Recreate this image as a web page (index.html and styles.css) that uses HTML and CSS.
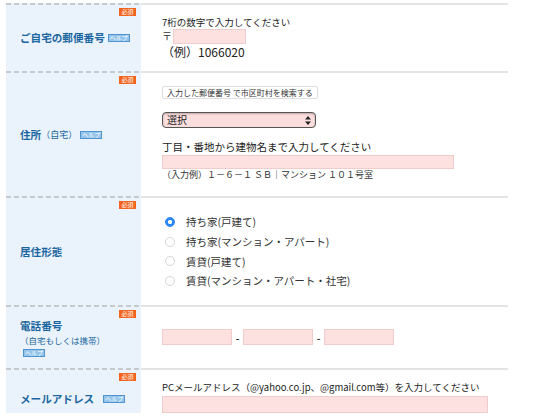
FILE: index.html
```html
<!DOCTYPE html>
<html lang="ja">
<head>
<meta charset="utf-8">
<title>お客様情報入力</title>
<link rel="stylesheet" href="styles.css">
</head>
<body>
<div class="form">
  <div class="row r1">
    <div class="th">
      <span class="req">必須</span>
      <div class="label"><span>ご自宅の郵便番号</span><span class="help">ヘルプ</span></div>
    </div>
    <div class="td td1">
      <p class="note">7桁の数字で入力してください</p>
      <div class="zip"><span class="mark">〒</span><input class="in zip-in" type="text"></div>
      <p class="ex">（例）1066020</p>
    </div>
  </div>

  <div class="row r2">
    <div class="th">
      <span class="req">必須</span>
      <div class="label"><span>住所</span><span class="sub">（自宅）</span><span class="help">ヘルプ</span></div>
    </div>
    <div class="td td2">
      <button class="search" type="button">入力した郵便番号 で市区町村を検索する</button>
      <div class="select">
        <select class="sel"><option>選択</option></select>
        <svg class="arrows" width="6" height="9" viewBox="0 0 6 9"><path d="M3 0 L6 3.5 H0 Z M3 9 L6 5.5 H0 Z" fill="#222"/></svg>
      </div>
      <p class="addr-note">丁目・番地から建物名まで入力してください</p>
      <input class="in addr-in" type="text">
      <p class="addr-ex">（入力例）１－６－１ ＳＢ｜マンション １０１号室</p>
    </div>
  </div>

  <div class="row r3">
    <div class="th">
      <span class="req">必須</span>
      <div class="label"><span>居住形態</span></div>
    </div>
    <div class="td td3">
      <ul class="radios">
        <li><input type="radio" name="house" checked><span>持ち家(戸建て)</span></li>
        <li><input type="radio" name="house"><span>持ち家(マンション・アパート)</span></li>
        <li><input type="radio" name="house"><span>賃貸(戸建て)</span></li>
        <li><input type="radio" name="house"><span>賃貸(マンション・アパート・社宅)</span></li>
      </ul>
    </div>
  </div>

  <div class="row r4">
    <div class="th">
      <span class="req">必須</span>
      <div class="label-block">
        <div class="label"><span>電話番号</span></div>
        <div class="sub-line">（自宅もしくは携帯）</div>
        <span class="help help-block">ヘルプ</span>
      </div>
    </div>
    <div class="td td4">
      <div class="tel">
        <input class="in tel-in" type="text"><span class="dash">-</span><input class="in tel-in" type="text"><span class="dash">-</span><input class="in tel-in" type="text">
      </div>
    </div>
  </div>

  <div class="row r5">
    <div class="th th5">
      <span class="req">必須</span>
      <div class="label"><span>メールアドレス</span><span class="help help-wide">ヘルプ</span></div>
    </div>
    <div class="td td5">
      <p class="note">PCメールアドレス（@yahoo.co.jp、@gmail.com等）を入力してください</p>
      <input class="in mail-in" type="text">
    </div>
  </div>
</div>
</body>
</html>
```

FILE: styles.css
```css
* { box-sizing: border-box; }
html, body { margin: 0; padding: 0; background: #fff; }
body {
  font-family: "Noto Sans CJK JP", "Noto Sans", sans-serif;
  color: #333;
  overflow: hidden;
}
p { margin: 0; }

.form { margin: 3px 0 0 6px; width: 502px; }

.row { display: grid; grid-template-columns: 135px 1fr; }
.r1 { height: 68px; }
.r2 { height: 125px; }
.r3 { height: 109px; }
.r4 { height: 63px; }
.r5 { height: 45px; }

.th {
  position: relative;
  display: flex;
  align-items: center;
  padding: 2px 0 0 14px;
  background:
    linear-gradient(to right, #c6cacd 5px, transparent 5px) 0 0 / 8px 2px repeat-x,
    #eaf3fb;
}
.th5 { align-items: flex-start; padding-top: 23px; }

.td {
  border-top: 2px solid #e4e4e4;
  padding-left: 21px;
}

.label {
  display: flex;
  align-items: center;
  color: #1b66a0;
  font-size: 10.6px;
  font-weight: bold;
  line-height: 16px;
  white-space: nowrap;
}
.sub { font-weight: normal; font-size: 9px; }

.help {
  display: inline-block;
  height: 8px;
  padding: 0 1px;
  margin-left: 3px;
  border: 1px solid #4f93cf;
  background: #96c5eb;
  color: #fff;
  font-size: 6px;
  line-height: 6px;
  font-weight: normal;
}
.help-wide { margin-left: 9px; }
.help-block { margin: 3px 0 0 3px; }

.label-block { display: flex; flex-direction: column; align-items: flex-start; }
.sub-line { color: #1b66a0; font-size: 8.5px; line-height: 12px; }

.req {
  position: absolute;
  top: 5px;
  right: 5px;
  width: 17px;
  height: 8px;
  background: #f3631c;
  color: #fff;
  font-size: 6px;
  line-height: 8px;
  text-align: center;
}

.in {
  display: block;
  margin: 0;
  padding: 0;
  border: 1px solid #f1cccc;
  background: #fde0e0;
  border-radius: 0;
  outline: none;
}

/* row 1 */
.note { font-size: 9.5px; line-height: 14px; color: #222; }
.td1 .note { padding-top: 10px; }
.zip { display: flex; align-items: flex-start; height: 15px; }
.mark { width: 11px; font-size: 10px; color: #333; line-height: 13px; }
.zip-in { width: 73px; height: 15px; }
.ex { margin-top: 1px; font-size: 12px; line-height: 14px; color: #222; }

/* row 2 */
.search {
  display: block;
  margin: 13px 0 0 0;
  height: 13px;
  padding: 0 4px;
  border: 1px solid #dedede;
  border-radius: 2px;
  background: #fff;
  font-family: inherit;
  font-size: 8px;
  line-height: 11px;
  color: #333;
  white-space: nowrap;
}
.select { position: relative; width: 154px; height: 16px; margin-top: 13px; }
.sel {
  -webkit-appearance: none;
  appearance: none;
  display: block;
  width: 154px;
  height: 16px;
  margin: 0;
  padding: 0 0 0 4px;
  border: 1px solid #555;
  border-radius: 4px;
  background: #fcdede;
  box-shadow: inset 0 1px 2px rgba(0,0,0,0.25);
  font-family: inherit;
  font-size: 10px;
  line-height: 14px;
  color: #222;
}
.arrows { position: absolute; right: 5px; top: 4px; }
.addr-note { margin-top: 12px; font-size: 10.5px; line-height: 14px; color: #222; }
.addr-in { width: 292px; height: 14px; margin-top: 1px; }
.addr-ex { font-size: 9px; line-height: 12px; color: #333; }

/* row 3 */
.radios { list-style: none; margin: 0; padding: 14px 0 0 3px; }
.radios li { display: flex; align-items: center; height: 19.7px; font-size: 10.5px; color: #333; }
.radios input {
  -webkit-appearance: none;
  appearance: none;
  width: 10px;
  height: 10px;
  margin: 0 11px 0 0;
  border: 1px solid #d6d6d6;
  border-radius: 50%;
  background: #fff;
}
.radios input:checked {
  border-color: #2a86f1;
  background: radial-gradient(circle, #fff 0 1.8px, #2a86f1 2.4px);
}

/* row 4 */
.tel { display: flex; align-items: center; padding-top: 22px; }
.tel-in { width: 70px; height: 16px; }
.dash { width: 11px; text-align: center; font-size: 10px; font-weight: bold; color: #333; }

/* row 5 */
.td5 .note { padding-top: 10px; }
.mail-in { width: 326px; height: 17px; margin-top: 2px; }
```
